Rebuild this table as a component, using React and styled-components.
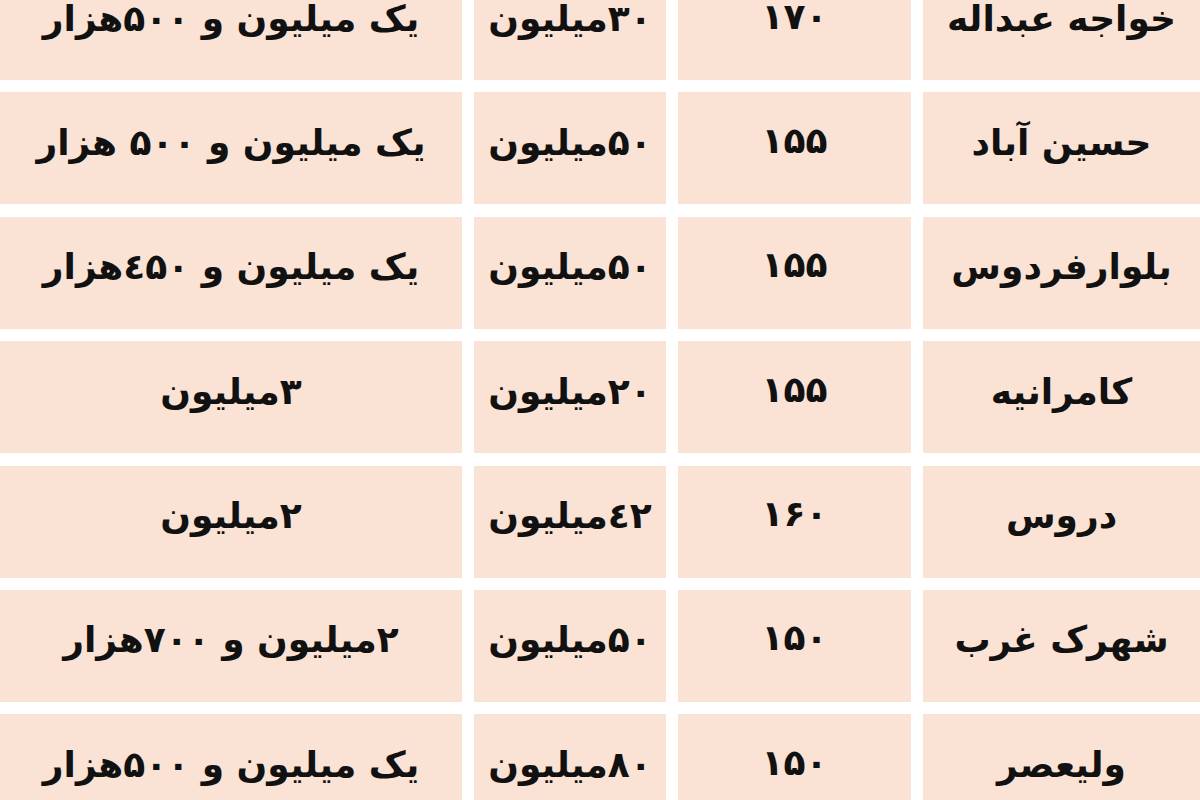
import React from 'react';
import styled, { createGlobalStyle } from 'styled-components';

const GlobalStyle = createGlobalStyle`
  html, body {
    margin: 0;
    padding: 0;
    background: #ffffff;
  }
  body {
    font-family: "DejaVu Sans", "Noto Sans", sans-serif;
  }
`;

const rows = [
  ['خواجه عبداله', '۱۷۰', '۳۰میلیون', 'یک میلیون و ۵۰۰هزار'],
  ['حسین آباد', '۱۵۵', '۵۰میلیون', 'یک میلیون و ۵۰۰ هزار'],
  ['بلوارفردوس', '۱۵۵', '۵۰میلیون', 'یک میلیون و ٤۵۰هزار'],
  ['کامرانیه', '۱۵۵', '۲۰میلیون', '۳میلیون'],
  ['دروس', '۱۶۰', '٤۲میلیون', '۲میلیون'],
  ['شهرک غرب', '۱۵۰', '۵۰میلیون', '۲میلیون و ۷۰۰هزار'],
  ['ولیعصر', '۱۵۰', '۸۰میلیون', 'یک میلیون و ۵۰۰هزار'],
];

const Page = styled.div`
  width: 1200px;
  height: 800px;
  overflow: hidden;
  background: #ffffff;
`;

const Table = styled.div`
  direction: rtl;
  display: grid;
  grid-template-columns: 277px 233px 192px 1fr;
  grid-auto-rows: 112px;
  column-gap: 12px;
  row-gap: 12.4px;
  margin-top: -32px;
`;

const Cell = styled.div`
  background: #fae2d4;
  display: flex;
  align-items: center;
  justify-content: center;
  padding-bottom: ${p => (p.$num ? '16px' : '12px')};
  box-sizing: border-box;
  color: #111;
  font-size: ${p => (p.$num ? '36px' : '36px')};
  font-weight: bold;
  white-space: nowrap;
`;

export default function App() {
  return (
    <>
      <GlobalStyle />
      <Page>
        <Table>
          {rows.map((r, i) => (
            <React.Fragment key={i}>
              <Cell>{r[0]}</Cell>
              <Cell $num>{r[1]}</Cell>
              <Cell>{r[2]}</Cell>
              <Cell>{r[3]}</Cell>
            </React.Fragment>
          ))}
        </Table>
      </Page>
    </>
  );
}
